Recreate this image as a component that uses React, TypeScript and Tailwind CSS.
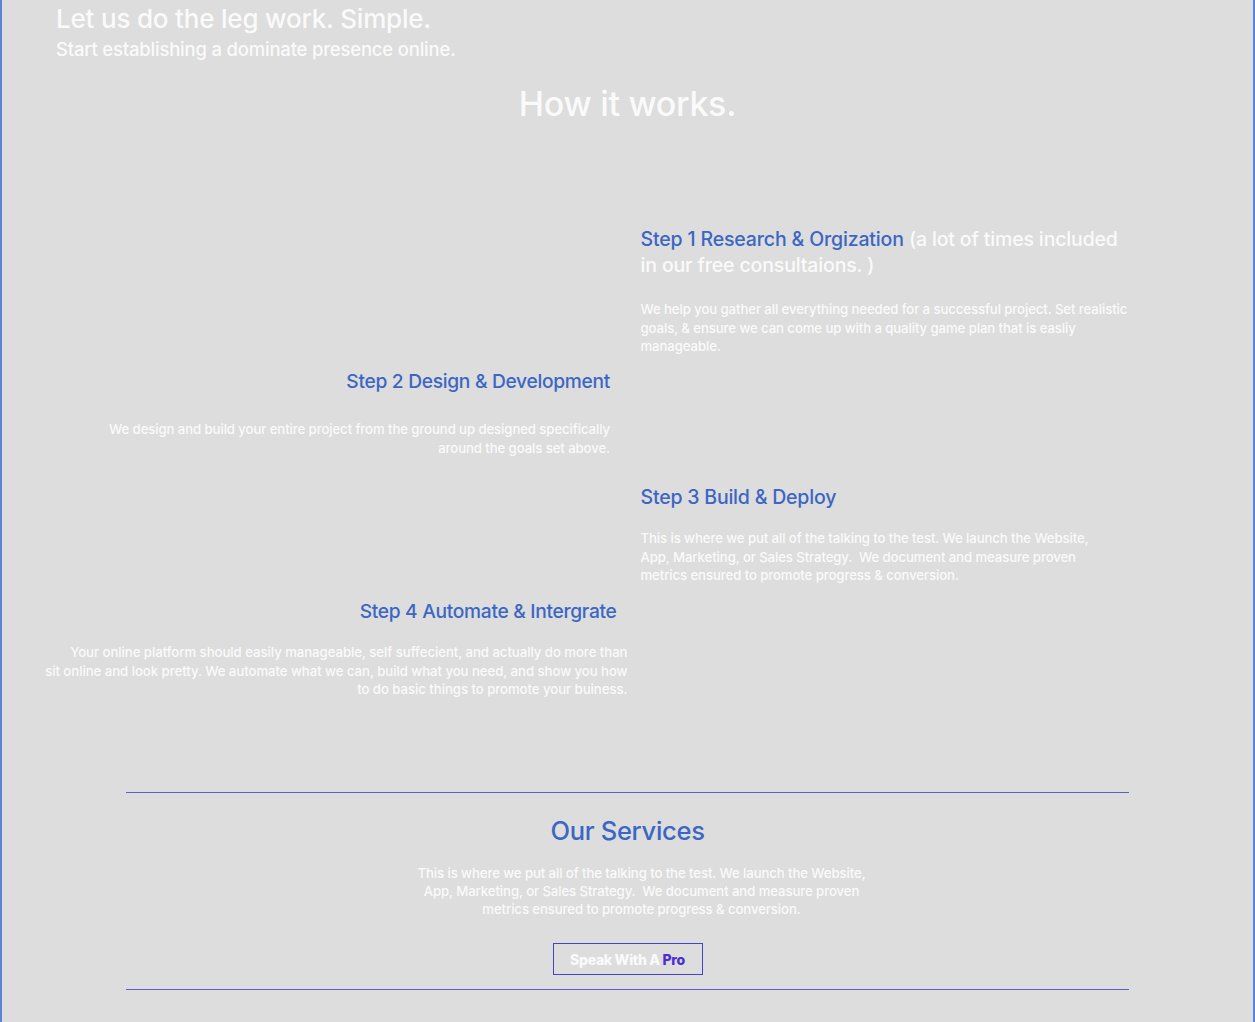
import React from 'react';

const App: React.FC = () => {
  return (
    <div
      className="min-h-[1022px] w-full bg-[#dddddd] border-l-2 border-r-2 border-[#5b84d6] text-[#fafafa] overflow-hidden"
      style={{ fontFamily: 'Inter, "Noto Sans", sans-serif' }}
    >
      {/* Hero */}
      <div className="pl-[54px] pt-[4px]">
        <h1 className="text-[26px] font-medium leading-[30px] tracking-[-0.2px]">Let us do the leg work. Simple.</h1>
        <p className="text-[18.5px] font-medium leading-[24px] mt-[3px] tracking-[-0.2px]">Start establishing a dominate presence online.</p>
      </div>

      <h2 className="text-center text-[34px] font-medium leading-[40px] mt-[23px] tracking-[-0.3px]">How it works.</h2>

      {/* Steps */}
      <div className="mt-[102px] flex flex-col">
        {/* Step 1 */}
        <div className="grid grid-cols-2">
          <div />
          <div className="pl-[13px]">
            <h3 className="text-[19.5px] font-medium leading-[26px] tracking-[-0.15px] whitespace-nowrap">
              <span className="text-[#3b66c4]">Step 1 Research &amp; Orgization</span>
              <span> (a lot of times included<br />in our free consultaions. )</span>
            </h3>
            <p className="mt-[22px] text-[13.2px] font-medium leading-[18.5px] tracking-[-0.1px] whitespace-nowrap">
              We help you gather all everything needed for a successful project. Set realistic<br />
              goals, &amp; ensure we can come up with a quality game plan that is easliy<br />
              manageable.
            </p>
          </div>
        </div>

        {/* Step 2 */}
        <div className="grid grid-cols-2 mt-[12.5px]">
          <div className="pr-[17.5px] text-right">
            <h3 className="text-[19.2px] font-medium leading-[26px] text-[#3b66c4] tracking-[-0.3px]">Step 2 Design &amp; Development</h3>
            <p className="mt-[26px] text-[13.2px] font-medium leading-[18.5px] tracking-[-0.1px] whitespace-nowrap">
              We design and build your entire project from the ground up designed specifically<br />
              around the goals set above.
            </p>
          </div>
          <div />
        </div>

        {/* Step 3 */}
        <div className="grid grid-cols-2 mt-[27px]">
          <div />
          <div className="pl-[13px]">
            <h3 className="text-[19.5px] font-medium leading-[26px] text-[#3b66c4] tracking-[-0.2px]">Step 3 Build &amp; Deploy</h3>
            <p className="mt-[19px] text-[13.2px] font-medium leading-[18.5px] tracking-[-0.1px] whitespace-nowrap">
              This is where we put all of the talking to the test. We launch the Website,<br />
              App, Marketing, or Sales Strategy.&nbsp; We document and measure proven<br />
              metrics ensured to promote progress &amp; conversion.
            </p>
          </div>
        </div>

        {/* Step 4 */}
        <div className="grid grid-cols-2 mt-[13.5px]">
          <div className="text-right">
            <h3 className="text-[19.2px] font-medium leading-[26px] text-[#3b66c4] pr-[11px] tracking-[-0.3px]">Step 4 Automate &amp; Intergrate</h3>
            <p className="mt-[19px] text-[13.2px] font-medium leading-[18.5px] tracking-[-0.05px] whitespace-nowrap">
              Your online platform should easily manageable, self suffecient, and actually do more than<br />
              sit online and look pretty. We automate what we can, build what you need, and show you how<br />
              to do basic things to promote your buiness.
            </p>
          </div>
          <div />
        </div>
      </div>

      {/* Services */}
      <div className="mx-[124px] mt-[93.5px] border-t border-b border-[#5c5fd0] flex flex-col items-center pt-[22px] pb-[14px]">
        <h2 className="text-[25.5px] font-medium leading-[32px] text-[#3b66c4] tracking-[-0.3px]">Our Services</h2>
        <p className="mt-[17px] ml-[28px] text-center text-[13.2px] font-medium leading-[18px] tracking-[-0.1px] whitespace-nowrap">
          This is where we put all of the talking to the test. We launch the Website,<br />
          App, Marketing, or Sales Strategy.&nbsp; We document and measure proven<br />
          metrics ensured to promote progress &amp; conversion.
        </p>
        <button className="mt-[25px] w-[150px] h-[32px] border border-[#4b3fd0] text-[14px] font-extrabold tracking-[-0.3px]">
          Speak With A <span className="text-[#4a2fd8]">Pro</span>
        </button>
      </div>
    </div>
  );
};

export default App;
